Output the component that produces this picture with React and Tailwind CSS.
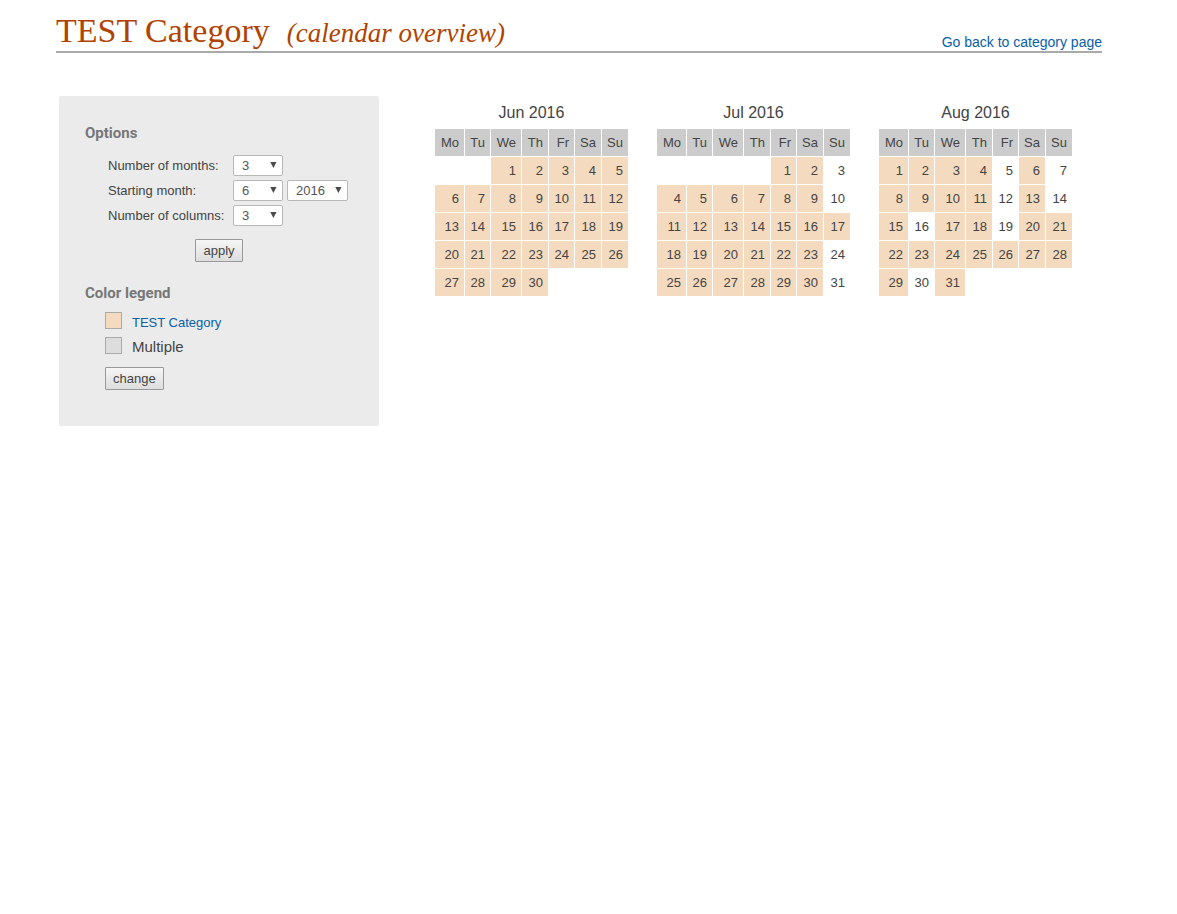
const WEEKDAYS = ["Mo", "Tu", "We", "Th", "Fr", "Sa", "Su"];

const MONTHS = [
  { name: "Jun 2016", offset: 2, days: 30, free: [] },
  { name: "Jul 2016", offset: 4, days: 31, free: [3, 10, 24, 31] },
  { name: "Aug 2016", offset: 0, days: 31, free: [5, 7, 12, 14, 16, 19, 30] },
];

function weeksOf({ offset, days }) {
  return Array.from({ length: Math.ceil((offset + days) / 7) }, (_, week) =>
    WEEKDAYS.map((_, i) => {
      const day = week * 7 + i - offset + 1;
      return day >= 1 && day <= days ? day : null;
    }),
  );
}

function Month({ month }) {
  return (
    <table className="w-[195px] table-fixed border-separate border-spacing-px text-[13px] leading-[27px]">
      <caption className="pt-0.5 text-base leading-[30px]">{month.name}</caption>
      <colgroup>
        <col className="w-[29px]" />
        <col className="w-[25px]" />
        <col className="w-[30px]" />
        <col className="w-[26px]" />
        <col className="w-[25px]" />
        <col className="w-[26px]" />
        <col className="w-[26px]" />
      </colgroup>
      <thead>
        <tr>
          {WEEKDAYS.map((d) => (
            <th key={d} scope="col" className="bg-[#cccccc] p-0 pr-[5px] text-right font-normal">
              {d}
            </th>
          ))}
        </tr>
      </thead>
      <tbody>
        {weeksOf(month).map((week, w) => (
          <tr key={w}>
            {week.map((day, i) => (
              <td
                key={i}
                className={
                  day && !month.free.includes(day)
                    ? "bg-[#f4dabf] p-0 pr-[5px] text-right"
                    : "p-0 pr-[5px] text-right"
                }
              >
                {day}
              </td>
            ))}
          </tr>
        ))}
      </tbody>
    </table>
  );
}

function Select({ id, label, value, options, wide }) {
  return (
    <span className="relative inline-flex w-fit">
      <select
        id={id}
        aria-label={label}
        defaultValue={value}
        className={`${wide ? "w-[61px]" : "w-[50px]"} h-[21px] appearance-none rounded-xs border border-[#b8b8b8] bg-white pl-2 text-[13px] leading-[19px] text-[#555555]`}
      >
        {options.map((o) => (
          <option key={o}>{o}</option>
        ))}
      </select>
      <svg
        aria-hidden="true"
        viewBox="0 0 7 6"
        className="pointer-events-none absolute top-[7px] right-[6px] h-[6px] w-[7px] fill-[#4a4a4a]"
      >
        <path d="M0.3 0h6.2L3.4 6z" />
      </svg>
    </span>
  );
}

function Button({ children }) {
  return (
    <button
      type="button"
      className="h-[23px] rounded-[1px] border border-[#999999] bg-linear-to-b from-[#f6f6f6] to-[#dddddd] px-[7px] text-[13px] leading-[21px]"
    >
      {children}
    </button>
  );
}

const NUMBERS = Array.from({ length: 12 }, (_, i) => i + 1);
const YEARS = [2014, 2015, 2016, 2017, 2018];

export default function App() {
  return (
    <div className="min-h-screen bg-white pt-[11px] pr-[75px] pl-14 font-['Liberation_Sans',Arial,sans-serif] text-[#444444]">
      <header className="flex h-[42px] justify-between border-b-2 border-[#aaaaaa]">
        <h1 className="flex items-baseline gap-[17px] font-['Liberation_Serif','Times_New_Roman',serif] text-[34px] leading-[39px] text-[#b04300]">
          TEST Category
          <em className="text-[27px] leading-8">(calendar overview)</em>
        </h1>
        <a href="#category" className="self-end text-sm leading-[18px] text-[#0860a8]">
          Go back to category page
        </a>
      </header>

      <main className="mt-[43px] ml-[3px] flex items-start gap-[55px]">
        <form className="h-[330px] w-80 shrink-0 rounded-xs bg-[#ebebeb] px-[26px] pt-[27px]">
          <h2 className="font-[Roboto,sans-serif] text-[15px] leading-5 font-bold text-[#777777]">Options</h2>
          <div className="mt-3 ml-[23px] grid grid-cols-[121px_auto] items-center gap-x-1 gap-y-1 text-[13px] leading-[21px]">
            <label htmlFor="months">Number of months:</label>
            <Select id="months" value={3} options={NUMBERS} />
            <label htmlFor="start">Starting month:</label>
            <div className="flex gap-1">
              <Select id="start" value={6} options={NUMBERS} />
              <Select id="year" label="Starting year" value={2016} options={YEARS} wide />
            </div>
            <label htmlFor="columns">Number of columns:</label>
            <Select id="columns" value={3} options={NUMBERS} />
          </div>
          <div className="mt-[13px] flex justify-center">
            <Button>apply</Button>
          </div>

          <h2 className="mt-[21px] font-[Roboto,sans-serif] text-[15px] leading-5 font-bold text-[#777777]">
            Color legend
          </h2>
          <div className="ml-5">
            <ul className="mt-[9px]">
              <li className="flex h-[25px] items-start gap-[10px]">
                <span className="size-[17px] border border-[#aaaaaa] bg-[#f4dabf]" />
                <a href="#test-category" className="text-[13px] leading-[22px] text-[#0860a8]">
                  TEST Category
                </a>
              </li>
              <li className="flex h-[25px] items-start gap-[10px]">
                <span className="size-[17px] border border-[#aaaaaa] bg-[#dddddd]" />
                <span className="text-[15px] leading-5">Multiple</span>
              </li>
            </ul>
            <div className="mt-[5px] flex">
              <Button>change</Button>
            </div>
          </div>
        </form>

        <div className="grid grid-cols-[repeat(3,195px)] gap-x-[27px]">
          {MONTHS.map((m) => (
            <Month key={m.name} month={m} />
          ))}
        </div>
      </main>
    </div>
  );
}
